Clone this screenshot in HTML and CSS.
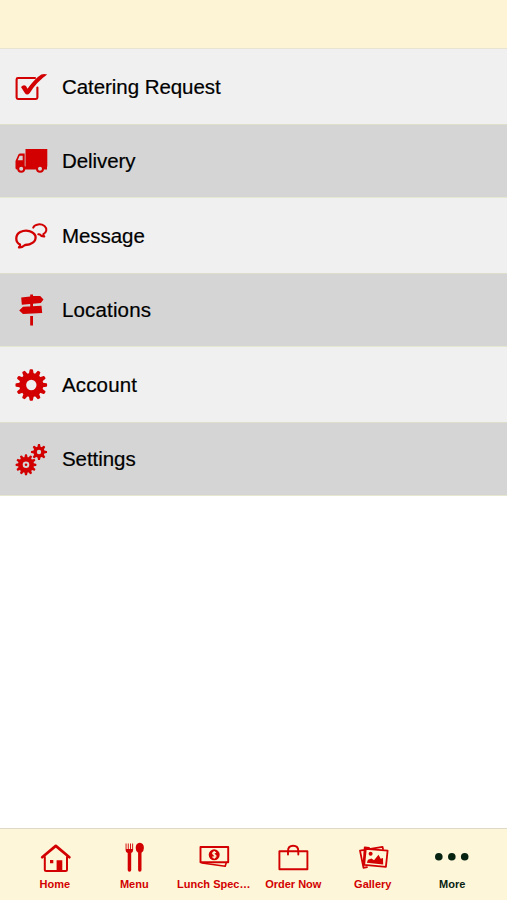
FILE: index.html
```html
<!DOCTYPE html>
<html lang="en">
<head>
<meta charset="utf-8">
<title>More</title>
<link rel="stylesheet" href="styles.css">
</head>
<body>
<div class="app">
<header class="topbar"></header>
<main class="list">
  <a class="row"><svg class="row-icon" viewBox="0 0 46 44"><path class="line" stroke-width="2.1" d="M27 13H10Q8.6 13 8.6 14.4V32.6Q8.6 34 10 34H28Q29.4 34 29.4 32.6V22.5"/><path d="M13 22Q15.5 19 18 21L19.5 23.8Q27 13.5 33.3 9.6Q36 8.4 39.2 9.5Q28.5 17 21.8 28Q19 31 16.8 28Z"/></svg><span>Catering Request</span></a>
  <a class="row"><svg class="row-icon" viewBox="0 0 46 44"><path d="M17.5 10H39.3V27.5H17.5ZM7.5 22L10.3 15.7Q11 14.4 12.3 14.4H16.7V27.5H39V30.5H9Q7.5 30.5 7.5 29Z"/><path class="hole" d="M9.7 21.3L11.6 16.7H14.7V21.3Z"/><circle class="ring" cx="13.2" cy="29.8" r="3"/><circle class="ring" cx="32" cy="29.8" r="3"/></svg><span>Delivery</span></a>
  <a class="row"><svg class="row-icon" viewBox="0 0 46 44"><path class="line" stroke-width="2.3" d="M12 30.5C7 28 7 20.8 12.3 18C17.8 15.2 25.8 16.8 27.5 22.2C28.4 27.5 23 31.1 17 31Q14 33.8 11 33.4Q12.4 32 12 30.5Z"/><path class="line" stroke-width="2" d="M25.2 13.6C26.8 9.8 33 9.4 36.5 12C39.7 14.8 38.5 18.6 35.3 20.1Q35.3 21.5 36.3 22.5Q33.3 22.7 32 20.6L30.3 20.3"/></svg><span>Message</span></a>
  <a class="row"><svg class="row-icon" viewBox="0 0 46 44"><path d="M22.2 8.5V6.5H25V8L32.2 8L35.5 11.6L32.8 15L13.8 16.7L13.2 9.4ZM22.2 15H25V19H22.2ZM15 18.7L33.5 17.7L34.2 25L15 26L11.2 22.4ZM22.2 28H25V37.5H22.2Z"/></svg><span class="wide">Locations</span></a>
  <a class="row"><svg class="row-icon" viewBox="0 0 46 44"><defs><path id="tooth" d="M-2.6-10L-1.7-15Q-1.6-15.8-.8-15.8H.8Q1.6-15.8 1.7-15L2.6-10V10L1.7 15Q1.6 15.8.8 15.8H-.8Q-1.6 15.8-1.7 15L-2.6 10Z"/><g id="gear"><circle r="12"/><use href="#tooth"/><use href="#tooth" transform="rotate(30)"/><use href="#tooth" transform="rotate(60)"/><use href="#tooth" transform="rotate(90)"/><use href="#tooth" transform="rotate(120)"/><use href="#tooth" transform="rotate(150)"/></g></defs><use href="#gear" transform="translate(23.3 22)"/><circle class="hole" cx="23.3" cy="22" r="5.2"/></svg><span class="wide">Account</span></a>
  <a class="row"><svg class="row-icon" viewBox="0 0 46 44"><use href="#gear" transform="translate(18 27.8) scale(.66)"/><circle class="hole" cx="18" cy="27.8" r="3.3"/><circle cx="18" cy="27.8" r="1.3"/><g transform="translate(31 15) scale(.51)"><circle r="11"/><use href="#tooth" transform="scale(1.2 1)"/><use href="#tooth" transform="rotate(45) scale(1.2 1)"/><use href="#tooth" transform="rotate(90) scale(1.2 1)"/><use href="#tooth" transform="rotate(135) scale(1.2 1)"/></g><circle class="hole" cx="31" cy="15" r="2.2"/></svg><span>Settings</span></a>
</main>
<nav class="tabs">
  <a class="tab"><svg class="tab-icon" viewBox="0 0 40 36"><path class="line" stroke-width="2.7" d="M7.2 17.2L20.8 5.9L34.4 17.2"/><path class="line" stroke-width="2" d="M9.8 17V29.5Q9.8 31 11.3 31H30.5Q32 31 32 29.5V17"/><path d="M21.6 20.3H27.3V31H21.6ZM15 20H18.3V23.2H15Z"/></svg><span>Home</span></a>
  <a class="tab"><svg class="tab-icon" viewBox="0 0 40 36"><path d="M11.6 3.5H12.5V9H13.8V3.5H14.7V9H16V3.5H16.9V9H18.2V3.5H19.1V10Q19.1 12.3 17.2 13V30Q17.2 31.8 15.4 31.8Q13.7 31.8 13.7 30V13Q11.6 12.3 11.6 10ZM25.8 2.8Q29.9 3.3 29.9 8Q29.9 11.5 27.5 12.7V30Q27.5 31.8 25.8 31.8Q24.1 31.8 24.1 30V12.7Q21.7 11.5 21.7 8Q21.7 3.3 25.8 2.8Z"/></svg><span>Menu</span></a>
  <a class="tab"><svg class="tab-icon" viewBox="0 0 40 36"><path class="line" stroke-width="1.9" d="M6.5 7H34.2V22.3H6.5Z"/><path class="line" stroke-width="1.6" d="M8 23L31.2 26.3L32.3 22.5"/><circle cx="20.2" cy="14.8" r="5.5"/><path class="cut" d="M22 12.8Q20.2 11.4 18.8 12.8Q18.3 14.2 20.2 14.7Q22.3 15.2 21.8 16.7Q20.2 18.2 18.4 16.8M20.2 11V18.8"/></svg><span>Lunch Spec…</span></a>
  <a class="tab"><svg class="tab-icon" viewBox="0 0 40 36"><path class="line" stroke-width="1.9" d="M6.4 11.2H34.4V29.2H6.4ZM15 14.5V11Q15 5.7 20.2 5.7Q25.3 5.7 25.3 11V14.5"/></svg><span>Order Now</span></a>
  <a class="tab"><svg class="tab-icon" viewBox="0 0 40 36"><path class="line" stroke-width="1.8" d="M30 9L29.5 6.8L7 10.6L10.5 27.8L14 27.1M16 8L11.7 7.5L10.5 25"/><path class="paper" stroke-width="1.8" d="M12.8 8.8L34.6 10.7L32.9 26.8L11.2 24.9Z"/><circle cx="17.6" cy="13.8" r="2"/><path d="M13.8 22.8L15 19.8L18.5 18.5L21 20.3L25.5 14.8L27.7 18.7L30 18L30.2 24.5Z"/></svg><span>Gallery</span></a>
  <a class="tab active"><svg class="tab-icon" viewBox="0 0 40 36"><circle cx="6.8" cy="16.7" r="3.8"/><circle cx="19.8" cy="16.7" r="3.8"/><circle cx="32.7" cy="16.7" r="3.8"/></svg><span>More</span></a>
</nav>
</div>
</body>
</html>
```
FILE: styles.css
```css
* { box-sizing: border-box; }
body {
  margin: 0;
  background: #fff;
  font-family: "Liberation Sans", Arial, sans-serif;
}
.app {
  display: flex;
  flex-direction: column;
  height: 900px;
}
.topbar {
  height: 49px;
  flex: none;
  background: #fcf4d4;
  border-bottom: 1px solid #e7e4d2;
}
.list {
  flex: 1;
  --row-bg: #f0f0f0;
}
.row {
  display: flex;
  align-items: center;
  gap: 8px;
  height: 75.5px;
  padding: 1.5px 0 0 8px;
  background: var(--row-bg);
  border-bottom: 1px solid #dedfcb;
  color: #000;
  font-size: 20.5px;
  letter-spacing: -0.06px;
  -webkit-text-stroke: 0.2px #000;
}
.row:nth-child(even) {
  --row-bg: #d5d5d5;
  height: 73.5px;
  padding-top: 0.5px;
  border-bottom-color: #e6e7cf;
}
.wide { letter-spacing: 0.15px; }
.row-icon {
  width: 46px;
  height: 44px;
  flex: none;
  fill: #d20000;
}
.line {
  fill: none;
  stroke: #d20000;
  stroke-linejoin: round;
  stroke-linecap: round;
}
.hole { fill: var(--row-bg); }
.ring {
  fill: var(--row-bg);
  stroke: #d20000;
  stroke-width: 2;
}
.tabs {
  display: flex;
  height: 72px;
  flex: none;
  padding: 11px 15px 0;
  background: #fef6d8;
  border-top: 1px solid #dedac7;
}
.tab {
  flex: 1 1 0;
  display: flex;
  flex-direction: column;
  align-items: center;
  color: #d20000;
  font-size: 11px;
  font-weight: bold;
  line-height: 14px;
  white-space: nowrap;
}
.tab span { margin-top: 1px; }
.tab-icon {
  width: 40px;
  height: 36px;
  fill: currentColor;
}
.cut {
  fill: none;
  stroke: #fef6d8;
  stroke-width: 1.2;
}
.paper {
  fill: #fef6d8;
  stroke: #d20000;
  stroke-linejoin: round;
}
.active { color: #062312; }
```
